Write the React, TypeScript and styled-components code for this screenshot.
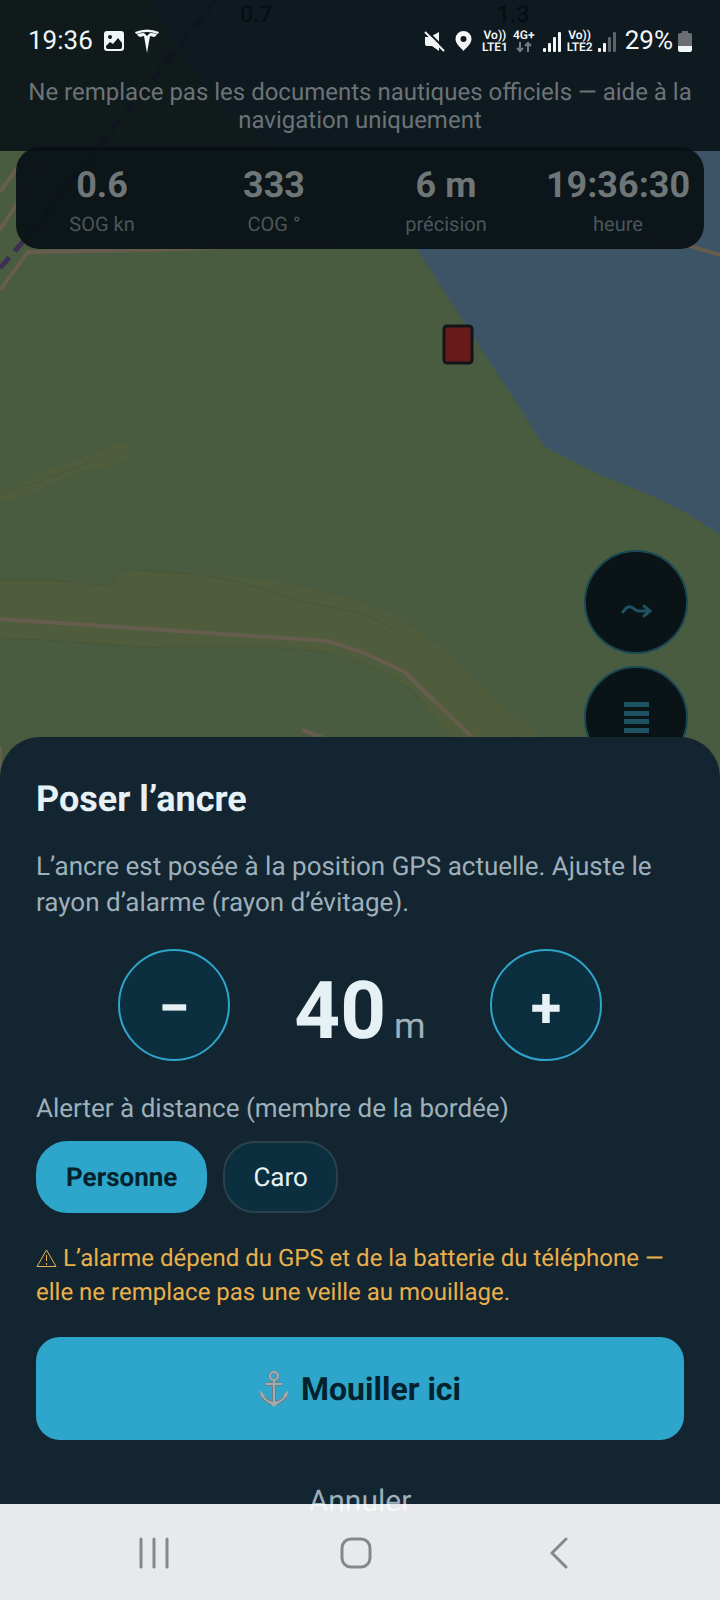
import React, { useState } from "react";
import styled, { createGlobalStyle } from "styled-components";

const GlobalStyle = createGlobalStyle`
  *, *::before, *::after { box-sizing: border-box; }
  html, body { margin: 0; background: #132530; }
  body, button { font-family: Roboto, "Noto Sans", sans-serif; text-rendering: geometricPrecision; }
  h1, p { margin: 0; }
  button { margin: 0; padding: 0; border: 0; background: none; cursor: pointer; }
`;

const Screen = styled.div`
  display: grid;
  grid-template-columns: minmax(0, 1fr);
  min-height: 100vh;
  overflow: hidden;
`;

const layer = `grid-area: 1 / 1;`;

const MapLayer = styled.div`
  ${layer}
  position: relative;
  background: #4a5c3f;
`;

const MapDrawing = styled.svg`
  position: absolute;
  inset: 0;
  width: 100%;
  height: 100%;
`;

const Content = styled.div`
  ${layer}
  position: relative;
  display: flex;
  flex-direction: column;
`;

const Header = styled.header`
  padding: 24px 16px 17px;
  background: rgba(8, 16, 22, 0.87);
`;

const StatusBar = styled.div`
  display: flex;
  justify-content: space-between;
  align-items: center;
  height: 34px;
  padding: 0 12px;
  color: #f2f6f7;
  font-size: 26px;
  line-height: 34px;
`;

const StatusGroup = styled.div<{ $gap: number }>`
  display: flex;
  align-items: center;
  gap: ${(p) => p.$gap}px;
`;

const Network = styled.span`
  display: flex;
  flex-direction: column;
  align-items: center;
  font-size: 12px;
  font-weight: 600;
  line-height: 12px;
`;

const Disclaimer = styled.p`
  margin-top: 20px;
  color: #6b7376;
  font-size: 24px;
  line-height: 28px;
  text-align: center;
`;

const Hud = styled.dl`
  display: grid;
  grid-template-columns: repeat(4, minmax(0, 1fr));
  margin: -4px 16px 0;
  padding: 18px 0 11px;
  border-radius: 24px;
  background: rgba(7, 16, 20, 0.93);
`;

const Reading = styled.div`
  display: flex;
  flex-direction: column-reverse;
  align-items: center;
  gap: 5px;
`;

const ReadingLabel = styled.dt`
  color: #4a565b;
  font-size: 20px;
  line-height: 28px;
`;

const ReadingValue = styled.dd`
  margin: 0;
  color: #6f7678;
  font-size: 36px;
  font-weight: 700;
  line-height: 40px;
  white-space: nowrap;
`;

const MapTools = styled.div`
  display: flex;
  flex-direction: column;
  align-items: flex-end;
  gap: 12px;
  margin-top: auto;
  padding-right: 32px;
  height: 187px;
`;

const MapTool = styled.button`
  display: grid;
  place-items: center;
  flex: none;
  width: 104px;
  height: 104px;
  border: 2px solid #1a4855;
  border-radius: 50%;
  background: #0a1316;
`;

const Sheet = styled.section`
  position: relative;
  display: flex;
  flex-direction: column;
  padding: 40px 36px 76px;
  border-radius: 40px 40px 0 0;
  background: #132530;
`;

const Title = styled.h1`
  color: #e6f1f6;
  font-size: 36px;
  font-weight: 700;
  line-height: 44px;
`;

const Description = styled.p`
  margin-top: 28px;
  color: #9db0bb;
  font-size: 26px;
  line-height: 36px;
`;

const Stepper = styled.div`
  display: flex;
  justify-content: center;
  align-items: center;
  gap: 64px;
  margin-top: 28px;
`;

const StepButton = styled.button`
  display: grid;
  place-items: center;
  width: 112px;
  height: 112px;
  padding-top: 6px;
  border: 2px solid #2ea6cb;
  border-radius: 50%;
  background: #0c2f3f;
  color: #e6f1f6;
  font-size: 56px;
  font-weight: 700;
  line-height: 64px;
`;

const Radius = styled.output`
  min-width: 132px;
  padding-top: 12px;
  color: #e6f1f6;
  font-size: 80px;
  font-weight: 700;
  line-height: 100px;
  text-align: center;
`;

const Unit = styled.span`
  margin-left: 8px;
  color: #9db0bb;
  font-size: 36px;
  font-weight: 400;
  line-height: 36px;
`;

const FieldLabel = styled.p`
  margin-top: 30px;
  color: #9db0bb;
  font-size: 26px;
  line-height: 36px;
`;

const Chips = styled.div`
  display: flex;
  gap: 16px;
  margin-top: 14px;
`;

const Chip = styled.button<{ $active: boolean }>`
  height: 72px;
  padding: 2px 28px 0;
  border: 2px solid ${(p) => (p.$active ? "#2ea6cb" : "#2b414c")};
  border-radius: 32px;
  background: ${(p) => (p.$active ? "#2ea6cb" : "#0c2f3f")};
  color: ${(p) => (p.$active ? "#04222d" : "#e6f1f6")};
  font-size: 26px;
  font-weight: ${(p) => (p.$active ? 700 : 400)};
  line-height: 36px;
`;

const Warning = styled.p`
  margin-top: 28px;
  color: #e9b04b;
  font-size: 24px;
  line-height: 34px;
`;

const WarningIcon = styled.svg`
  width: 21px;
  height: 20px;
  margin-right: 6px;
  vertical-align: -2px;
`;

const DropButton = styled.button`
  display: flex;
  justify-content: center;
  align-items: center;
  gap: 12px;
  height: 103px;
  margin-top: 28px;
  border-radius: 24px;
  background: #2ea6cb;
  color: #04222d;
  font-size: 32px;
  font-weight: 700;
`;

const CancelButton = styled.button`
  align-self: center;
  margin-top: 40px;
  color: #9db0bb;
  font-size: 30px;
  line-height: 44px;
`;

const NavBar = styled.nav`
  ${layer}
  position: relative;
  align-self: end;
  display: flex;
  justify-content: space-around;
  align-items: center;
  height: 96px;
  padding: 2px 60px 0 52px;
  background: rgba(255, 255, 255, 0.9);
`;

const NavButton = styled.button`
  display: grid;
  place-items: center;
  width: 64px;
  height: 64px;
`;

const readings = [
  { label: "SOG kn", value: "0.6" },
  { label: "COG °", value: "333" },
  { label: "précision", value: "6 m" },
  { label: "heure", value: "19:36:30" },
];

const contacts = ["Personne", "Caro"];

function Chart() {
  return (
    <MapDrawing viewBox="0 0 720 1600" preserveAspectRatio="xMidYMin slice" aria-hidden="true">
      <rect width="720" height="1600" fill="#4a5c3f" />
      <path d="M148 0 L184 60 L230 120 L300 158 L370 200 L417 249 L480 347 L545 447 L598 474 L650 495 L690 515 L720 535 V0 Z" fill="#3d5466" />
      <g fill="#4f5d3c">
        <path d="M0 492 L33 479 L34 475 L80 459 L88 456 L118 443 Q128 440 130 449 Q131 457 122 461 L95 471 L88 468 L42 488 L42 494 L36 492 L0 503 Z" />
        <path d="M0 580 L50 580 L112 584 L119 573 L128 570 L210 574 L280 582 L330 594 L360 601 L400 618 L438 645 L475 682 L545 742 H452 L415 694 L388 674 L360 662 L325 652 L280 648 L160 648 L60 641 L0 638 Z" />
      </g>
      <g fill="none" stroke="#48563a" strokeWidth="1">
        <path d="M0 580 L50 580 L112 586 L119 573 L128 570 L205 575 L240 583 L262 589 L295 600 L330 607 L360 613 L380 621 L400 634 L432 650 L450 668 L480 697 L520 738" />
        <path d="M0 494 L38 482 L88 463" />
        <path d="M0 638 L60 641 L160 648 L280 648 L325 652 L360 662 L388 674 L415 694 L452 740" />
      </g>
      <g fill="none" stroke="#665d4e" strokeWidth="4" strokeLinejoin="round">
        <path d="M0 619 L328 641 L362 652 L405 672 L425 692 L474 739" />
        <path d="M302 730 L322 737" />
        <path d="M0 290 L28 252 L150 250 L340 243" />
        <path d="M0 192 L30 150 M0 230 L45 160" />
        <path d="M640 236 L690 246 L720 255" />
        <path d="M0 746 L0 770" />
      </g>
      <path d="M216 0 L96 150 L28 236 L0 268" fill="none" stroke="#3e2f55" strokeWidth="5" strokeDasharray="14 8" />
      <g fill="#000000" fontFamily="Roboto, sans-serif" fontSize="23" fontWeight="500">
        <text x="240" y="22">0.7</text>
        <text x="497" y="22">1.3</text>
      </g>
      <rect x="444" y="326" width="28" height="37" rx="3" fill="#6a1a1a" stroke="#111518" strokeWidth="3" />
    </MapDrawing>
  );
}

function PictureIcon() {
  return (
    <svg width="22" height="22" viewBox="0 0 22 22" aria-hidden="true">
      <rect x="1" y="1" width="20" height="20" rx="3" fill="#f2f6f7" />
      <circle cx="7" cy="7" r="2" fill="#101a1c" />
      <path d="M3 16 L7 12 L10 14 L15 8 L19 13 V17 Q19 19 17 19 H5 Q3 19 3 17 Z" fill="#101a1c" />
    </svg>
  );
}

function BrandIcon() {
  return (
    <svg width="24" height="24" viewBox="0 0 24 24" fill="#f2f6f7" aria-hidden="true">
      <path d="M0 3 Q12 -2 24 3 L23 5 Q12 1 1 5 Z" />
      <path d="M2 5 Q6 4 9 4 L12 7 L15 4 Q19 4 22 5 Q21 8 19 8 L15 7 L12 24 L9 7 L5 8 Q3 8 2 5 Z" />
    </svg>
  );
}

function MuteIcon() {
  return (
    <svg width="21" height="21" viewBox="0 0 21 21" aria-hidden="true">
      <path d="M1 6 H6 L15 1 V20 L8 15 H3 Q1 15 1 13 Z" fill="#f2f6f7" />
      <path d="M3 0 L21 18" stroke="#0f1a22" strokeWidth="2" />
      <path d="M1 1 L20 20" stroke="#f2f6f7" strokeWidth="2" />
    </svg>
  );
}

function PinIcon() {
  return (
    <svg width="17" height="21" viewBox="0 0 17 21" aria-hidden="true">
      <path fillRule="evenodd" fill="#f2f6f7" d="M8.500 0 A8 8 0 0 1 16.500 8 C16.500 13 11 17 8.500 20 C6 17 .5 13 .5 8 A8 8 0 0 1 8.500 0 Z M8.500 5 A3 3 0 1 0 8.500 11 A3 3 0 1 0 8.500 5 Z" />
    </svg>
  );
}

function VolteMark({ line }: { line: string }) {
  return (
    <Network>
      <span>Vo))</span>
      <span>{line}</span>
    </Network>
  );
}

function DataArrows() {
  return (
    <svg width="16" height="12" viewBox="0 0 16 12" fill="none" stroke="#747c80" strokeWidth="2" aria-hidden="true">
      <path d="M4 1 V10 M1 7 L4 10 L7 7 M12 11 V2 M9 5 L12 2 L15 5" />
    </svg>
  );
}

function SignalIcon({ bars }: { bars: number }) {
  return (
    <svg width="19" height="21" viewBox="0 0 19 21" aria-hidden="true">
      {[4, 9, 15, 20].map((height, i) => (
        <rect key={height} x={i * 5} y={21 - height} width="3" height={height} rx="1" fill={i < bars ? "#f2f6f7" : "#5b6469"} />
      ))}
    </svg>
  );
}

function BatteryIcon() {
  return (
    <svg width="14" height="21" viewBox="0 0 14 21" aria-hidden="true">
      <path d="M4 0 H10 V2 H12 Q14 2 14 4 V15 H0 V4 Q0 2 2 2 H4 Z" fill="#686e72" />
      <path d="M0 15 H14 V19 Q14 21 12 21 H2 Q0 21 0 19 Z" fill="#f2f6f7" />
    </svg>
  );
}

function AnchorIcon() {
  return (
    <svg width="30" height="38" viewBox="0 0 30 38" fill="none" aria-hidden="true">
      <g stroke="#6f7e86" strokeWidth="4">
        <circle cx="15" cy="6" r="4" strokeWidth="3" />
        <path d="M15 10 V34 M7 14 H23" />
        <path d="M2 23 Q5 31 15 34 Q25 31 28 23" />
      </g>
      <g stroke="#a3abaf" strokeWidth="2">
        <circle cx="15" cy="6" r="4" />
        <path d="M15 10 V34 M7 14 H23" />
        <path d="M2 23 Q5 31 15 34 Q25 31 28 23" />
      </g>
      <path d="M1 20 L6 26 L2 27 Z M29 20 L24 26 L28 27 Z M9 31 L15 32 L21 31 L15 37 Z" fill="#a3abaf" />
    </svg>
  );
}

export default function App() {
  const [radius, setRadius] = useState(40);
  const [contact, setContact] = useState("Personne");

  return (
    <>
      <GlobalStyle />
      <Screen>
        <MapLayer>
          <Chart />
        </MapLayer>
        <Content>
          <Header>
            <StatusBar>
              <StatusGroup $gap={10}>
                <span>19:36</span>
                <PictureIcon />
                <BrandIcon />
              </StatusGroup>
              <StatusGroup $gap={5}>
                <StatusGroup $gap={10}>
                  <MuteIcon />
                  <PinIcon />
                  <VolteMark line="LTE1" />
                </StatusGroup>
                <StatusGroup $gap={8}>
                  <Network>
                    <span>4G+</span>
                    <DataArrows />
                  </Network>
                  <SignalIcon bars={4} />
                </StatusGroup>
                <VolteMark line="LTE2" />
                <StatusGroup $gap={8}>
                  <SignalIcon bars={2} />
                  <span>29%</span>
                </StatusGroup>
                <BatteryIcon />
              </StatusGroup>
            </StatusBar>
            <Disclaimer>Ne remplace pas les documents nautiques officiels — aide à la navigation uniquement</Disclaimer>
          </Header>
          <Hud>
            {readings.map((r) => (
              <Reading key={r.label}>
                <ReadingLabel>{r.label}</ReadingLabel>
                <ReadingValue>{r.value}</ReadingValue>
              </Reading>
            ))}
          </Hud>
          <MapTools>
            <MapTool aria-label="Itinéraire">
              <svg width="32" height="34" viewBox="0 0 32 34" fill="none" stroke="#1d5262" strokeWidth="3" strokeLinecap="round" aria-hidden="true">
                <path d="M3 27 Q8 19 13 23 Q16 26 19 26 H30 M24 21 L30 26 L24 31" />
              </svg>
            </MapTool>
            <MapTool aria-label="Liste">
              <svg width="26" height="32" viewBox="0 0 26 32" fill="#1d5262" aria-hidden="true">
                <path d="M1 0 H26 V5 H1 Z M1 9 H26 V14 H1 Z M1 17 H26 V22 H1 Z M1 26 H26 V31 H1 Z" />
              </svg>
            </MapTool>
          </MapTools>
          <Sheet aria-labelledby="sheet-title">
            <Title id="sheet-title">Poser l’ancre</Title>
            <Description>L’ancre est posée à la position GPS actuelle. Ajuste le rayon d’alarme (rayon d’évitage).</Description>
            <Stepper>
              <StepButton aria-label="Réduire le rayon" onClick={() => setRadius((r) => Math.max(5, r - 5))}>
                −
              </StepButton>
              <Radius>
                {radius}
                <Unit>m</Unit>
              </Radius>
              <StepButton aria-label="Augmenter le rayon" onClick={() => setRadius((r) => r + 5)}>
                +
              </StepButton>
            </Stepper>
            <FieldLabel id="contact-label">Alerter à distance (membre de la bordée)</FieldLabel>
            <Chips role="group" aria-labelledby="contact-label">
              {contacts.map((name) => (
                <Chip key={name} $active={name === contact} aria-pressed={name === contact} onClick={() => setContact(name)}>
                  {name}
                </Chip>
              ))}
            </Chips>
            <Warning>
              <WarningIcon viewBox="0 0 21 20" fill="none" stroke="currentColor" aria-hidden="true">
                <path d="M10.500 2 L20 18.500 H1 Z M10.500 7 V13 M10.500 15 V17" />
              </WarningIcon>
              L’alarme dépend du GPS et de la batterie du téléphone — elle ne remplace pas une veille au mouillage.
            </Warning>
            <DropButton>
              <AnchorIcon />
              Mouiller ici
            </DropButton>
            <CancelButton>Annuler</CancelButton>
          </Sheet>
        </Content>
        <NavBar aria-label="Système">
          <NavButton aria-label="Applications récentes">
            <svg width="32" height="32" viewBox="0 0 32 32" stroke="#86878a" strokeWidth="3" strokeLinecap="round" aria-hidden="true">
              <path d="M4 2 V30 M17 2 V30 M30 2 V30" />
            </svg>
          </NavButton>
          <NavButton aria-label="Accueil">
            <svg width="32" height="32" viewBox="0 0 32 32" fill="none" stroke="#86878a" strokeWidth="3" aria-hidden="true">
              <rect x="2" y="2" width="28" height="28" rx="9" />
            </svg>
          </NavButton>
          <NavButton aria-label="Retour">
            <svg width="20" height="32" viewBox="0 0 20 32" fill="none" stroke="#86878a" strokeWidth="3" strokeLinecap="round" strokeLinejoin="round" aria-hidden="true">
              <path d="M17 2 L3 16 L17 30" />
            </svg>
          </NavButton>
        </NavBar>
      </Screen>
    </>
  );
}
